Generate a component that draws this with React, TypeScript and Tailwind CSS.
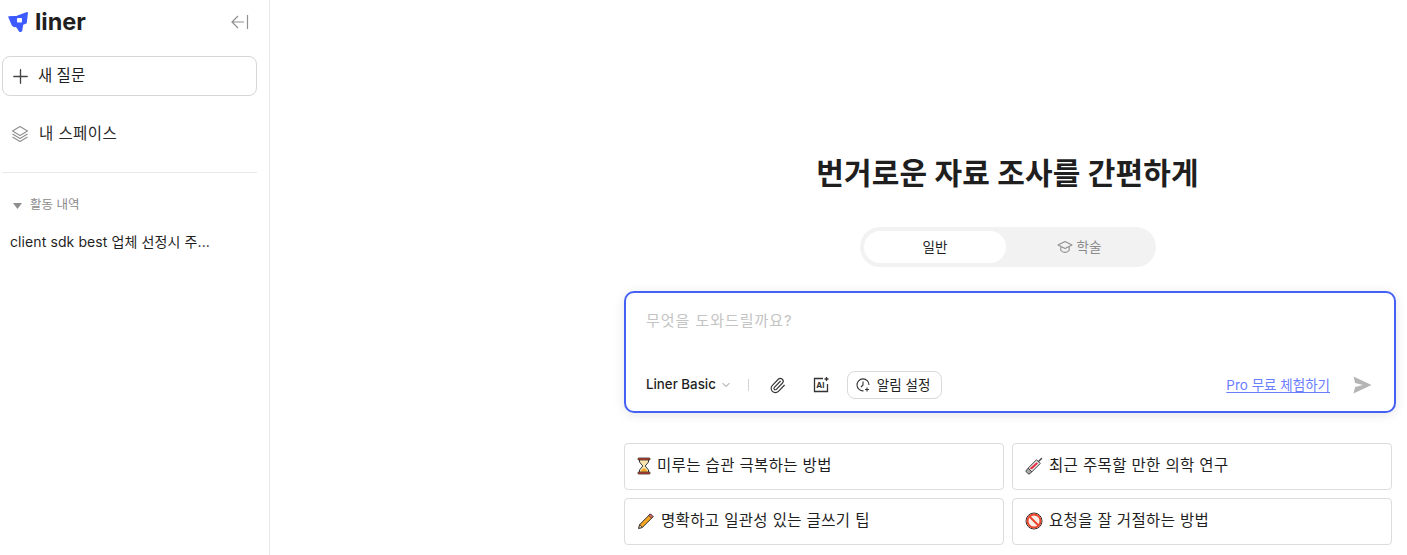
import React from 'react';
import { ChevronDown, Paperclip, Plus } from 'lucide-react';

const font = "font-['Inter','Noto_Sans_CJK_KR',sans-serif]";

const Hourglass = () => (
  <svg width="14" height="18" viewBox="0 0 14 18" className="shrink-0">
    <path d="M2.500 2.500h9v2.500L8.200 9l3.300 4v2.500h-9V13l3.300-4-3.300-4z" fill="#fde7b0" stroke="#3b3b3b" strokeWidth="1" />
    <path d="M3.600 14.800c.6-1.800 2-3 3.400-3.600 1.400.6 2.800 1.800 3.400 3.600z" fill="#f6a623" />
    <rect x="1" y="1" width="12" height="2" rx=".6" fill="#d9432f" stroke="#2b2b2b" strokeWidth=".8" />
    <rect x="1" y="15" width="12" height="2" rx=".6" fill="#d9432f" stroke="#2b2b2b" strokeWidth=".8" />
  </svg>
);

const Syringe = () => (
  <svg width="18" height="18" viewBox="0 0 18 18" className="shrink-0">
    <path d="M16.500 1.500 13.500 4.500" stroke="#444" strokeWidth="1.400" strokeLinecap="round" />
    <path d="M11.500 2.800l3.700 3.700-8.400 8.400-3.700-3.700z" fill="#e8e8e8" stroke="#3b3b3b" strokeWidth="1" />
    <path d="M11.700 5.200l1.200 1.200-5.900 5.900-2.400-.9z" fill="#e5283c" />
    <path d="M3.200 11.200l3.600 3.600-2 2c-.5.4-1.100.4-1.500 0l-2-2c-.4-.4-.4-1 0-1.500z" fill="#a9a9a9" stroke="#3b3b3b" strokeWidth="1" />
  </svg>
);

const Pencil = () => (
  <svg width="18" height="18" viewBox="0 0 18 18" className="shrink-0">
    <path d="M13.300 1.900l2.800 2.800L5.400 15.400l-3.700 1 1-3.800z" fill="#f5a623" stroke="#2f2f2f" strokeWidth="1" strokeLinejoin="round" />
    <path d="M13.300 1.900l2.800 2.800-1.500 1.500-2.800-2.800z" fill="#ee6a72" stroke="#2f2f2f" strokeWidth=".8" />
    <path d="M2.700 12.600l2.700 2.800-3.700 1z" fill="#f3d6a8" stroke="#2f2f2f" strokeWidth=".8" />
  </svg>
);

const NoEntry = () => (
  <svg width="18" height="18" viewBox="0 0 18 18" className="shrink-0">
    <circle cx="9" cy="9" r="8" fill="#fff" stroke="#2c2c2c" strokeWidth="1" />
    <circle cx="9" cy="9" r="6.500" fill="#fbeee8" stroke="#e8452c" strokeWidth="2" />
    <path d="M4.500 4.500l9 9" stroke="#e8452c" strokeWidth="2" />
  </svg>
);

const suggestions: { icon: React.ReactNode; label: string }[] = [
  { icon: <Hourglass />, label: '미루는 습관 극복하는 방법' },
  { icon: <Syringe />, label: '최근 주목할 만한 의학 연구' },
  { icon: <Pencil />, label: '명확하고 일관성 있는 글쓰기 팁' },
  { icon: <NoEntry />, label: '요청을 잘 거절하는 방법' },
];

const Sidebar = () => (
  <aside className="flex h-full w-[270px] shrink-0 flex-col border-r border-[#e8e8e8] pl-[2px] pr-[12px]">
    <div className="flex h-[44px] items-center justify-between pl-[6px] pr-[8px]">
      <div className="flex items-center gap-[7px]">
        <svg width="20" height="20" viewBox="0 0 20 20">
          <path d="M1 5 9 4.500 19.200.8 18 10.800l-3.500 1.400-1 6.600-1.600.6-3.600-5.400-1.800.6-2-1.400z" fill="#3d5afe" stroke="#3d5afe" strokeWidth="1.500" strokeLinejoin="round" />
          <rect x="9" y="6" width="5" height="4.500" rx=".8" fill="#fff" />
        </svg>
        <span className="text-[23.500px] leading-none font-bold text-[#1f1f1f]">liner</span>
      </div>
      <svg width="18" height="16" viewBox="0 0 18 16" fill="none" stroke="#8f8f8f" strokeWidth="1.200">
        <path d="M1 8h12M7 2 1 8l6 6M16.500 1v14" />
      </svg>
    </div>
    <button className="mt-[12px] flex h-[40px] items-center gap-[6px] rounded-[8px] border border-[#d6d6d6] pl-[6px] text-[15.500px] text-[#1f1f1f]">
      <Plus size={23} strokeWidth={1.400} className="text-[#444]" />
      <span>새 질문</span>
    </button>
    <div className="mt-[26px] flex items-center gap-[10px] pl-[9px] text-[15.500px] tracking-[0.4px] text-[#2a2a2a]">
      <svg width="18" height="18" viewBox="0 0 18 18" fill="none" stroke="#8f8f8f" strokeWidth="1.100" strokeLinejoin="round">
        <path d="M9 1.500 16.500 6 9 10.500 1.500 6z" />
        <path d="M1.500 9 9 13.500 16.500 9" />
        <path d="M1.500 12 9 16.500 16.500 12" />
      </svg>
      <span>내 스페이스</span>
    </div>
    <div className="mt-[27px] border-t border-[#e8e8e8]" />
    <div className="mt-[23px] flex items-center gap-[8px] pl-[11px] text-[12.500px] text-[#8a8a8a]">
      <svg width="9" height="6" viewBox="0 0 9 6" fill="#8f8f8f">
        <path d="M0 0h9L4.500 6z" />
      </svg>
      <span>활동 내역</span>
    </div>
    <p className="mt-[16px] pl-[8px] text-[14px] tracking-[0.1px] text-[#1f1f1f]">client sdk best 업체 선정시 주...</p>
  </aside>
);

const PromptBox = () => (
  <div className="mt-[24px] flex h-[122px] flex-col justify-between rounded-[10px] border-2 border-[#4560f5] bg-white pt-[17px] pb-[12px] pl-[20px] pr-[22px] shadow-[0_2px_12px_rgba(0,0,0,0.1)]">
    <p className="text-[15px] leading-[22px] tracking-[0.95px] text-[#c4c4c4]">무엇을 도와드릴까요?</p>
    <div className="flex items-center justify-between">
      <div className="flex items-center">
        <span className="text-[13.300px] font-medium text-[#1f1f1f]">Liner Basic</span>
        <ChevronDown size={12} className="ml-[4px] text-[#8f8f8f]" />
        <div className="ml-[16px] h-[12px] w-px bg-[#d4d4d4]" />
        <Paperclip size={17} strokeWidth={1.600} className="ml-[20px] text-[#333]" />
        <svg width="18" height="18" viewBox="0 0 18 18" fill="none" stroke="#333" strokeWidth="1.300" className="ml-[26px]">
          <path d="M11 2.500H2.500v13h13V8" />
          <path d="M14.500 1v4M12.500 3h4" />
          <text x="4.200" y="12.300" fontSize="8" fontWeight="700" fill="#333" stroke="none">AI</text>
        </svg>
        <button className="ml-[17px] flex h-[28px] w-[95px] items-center gap-[7px] rounded-[8px] border border-[#d9d9d9] pl-[8px] text-[13.500px] text-[#1f1f1f]">
          <svg width="14" height="14" viewBox="0 0 14 14" fill="none" stroke="#333" strokeWidth="1.100">
            <path d="M7.500 12.900A6 6 0 1 1 13 7" />
            <path d="M7 3.500V7L5 9M11 9.500v4M9 11.500h4" />
          </svg>
          <span>알림 설정</span>
        </button>
      </div>
      <div className="flex items-center gap-[23px]">
        <a className="text-[13.500px] text-[#6a7dff] underline underline-offset-2">Pro 무료 체험하기</a>
        <svg width="19" height="18" viewBox="0 0 19 18" fill="#b5b5b5">
          <path d="M0.500 0.500 18.500 9 0.500 17.500l1.600-6.600L10 9 2.100 7.100z" />
        </svg>
      </div>
    </div>
  </div>
);

export default function App() {
  return (
    <div className={`${font} flex h-[555px] w-[1407px] overflow-hidden bg-white`}>
      <Sidebar />
      <main className="ml-[354px] flex w-[772px] flex-col pt-[151px]">
        <h1 className="pr-[5px] text-center text-[30px] leading-[44px] font-bold tracking-[0.15px] text-[#1f1f1f]">번거로운 자료 조사를 간편하게</h1>
        <div className="mt-[32px] ml-[236px] flex h-[40px] w-[296px] items-center rounded-full bg-[#f2f2f2] p-[4px] text-[13.500px]">
          <div className="flex h-[32px] w-[142px] items-center justify-center rounded-full bg-white text-[#1f1f1f]">일반</div>
          <div className="flex flex-1 items-center justify-center gap-[4px] text-[#8a8a8a]">
            <svg width="16" height="14" viewBox="0 0 16 14" fill="none" stroke="#8f8f8f" strokeWidth="1.100" strokeLinejoin="round">
              <path d="M8 1.500 15 5 8 8.500 1 5z" />
              <path d="M3.800 6.600v3.600c1 1.400 2.600 2.200 4.200 2.200s3.200-.8 4.200-2.200V6.600" />
            </svg>
            <span>학술</span>
          </div>
        </div>
        <PromptBox />
        <div className="mt-[30px] grid w-[768px] grid-cols-2 gap-x-[8px] gap-y-[8px]">
          {suggestions.map((s) => (
            <button key={s.label} className="flex h-[47px] items-center gap-[6px] rounded-[4px] border border-[#dcdcdc] pb-[1px] pl-[12px] text-[15.500px] tracking-[0.35px] text-[#1f1f1f]">
              {s.icon}
              <span>{s.label}</span>
            </button>
          ))}
        </div>
      </main>
    </div>
  );
}
